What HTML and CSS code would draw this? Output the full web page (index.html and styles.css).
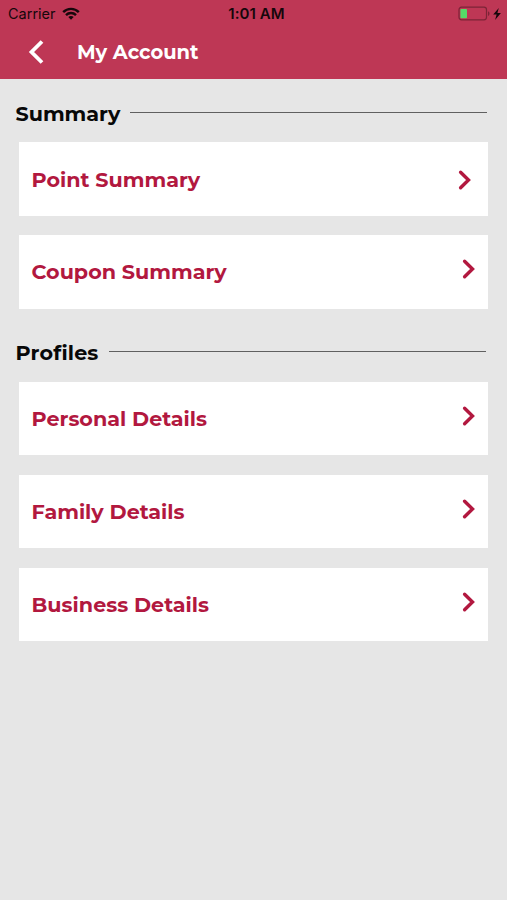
FILE: index.html
```html
<!DOCTYPE html>
<html lang="en">
<head>
<meta charset="utf-8">
<title>My Account</title>
<link rel="stylesheet" href="styles.css">
</head>
<body>
<header class="top">
  <div class="status">
    <div class="carrier"><span>Carrier</span>
      <svg class="wifi" width="18" height="14" viewBox="0 0 18 14" fill="none" stroke="#16070b" stroke-width="2.4"><path d="M1.200 5.200C5.600.8 12.400.8 16.800 5.200M4 8.100C6.800 5.300 11.200 5.300 14 8.100"/><path d="M9 12.800L6.300 10C7.800 8.600 10.200 8.600 11.700 10Z" fill="#16070b" stroke="none"/></svg>
    </div>
    <div class="time">1:01 AM</div>
    <div class="power">
      <svg width="44" height="16" viewBox="0 0 44 16"><rect x="1" y="1.200" width="27.500" height="12.600" rx="2.500" fill="none" stroke="#7c2437" stroke-width="1.200"/><rect x="2.400" y="3" width="6.600" height="9.200" rx=".8" fill="#55dc68"/><path d="M30 5.300c2 .8 2 3.800 0 4.600z" fill="#7c2437"/><path d="M40.800 2L35.200 8.400h3.400l-1.500 5.600 5.800-6.900h-3.500z" fill="#16070b"/></svg>
    </div>
  </div>
  <div class="nav">
    <svg class="back" width="18" height="26" viewBox="0 0 18 26" fill="none" stroke="#fff" stroke-width="3.800"><path d="M15 2.500L4.500 13l10.500 10.500"/></svg>
    <h1>My Account</h1>
  </div>
</header>
<main>
  <section>
    <h2>Summary</h2>
    <div class="cards">
      <a class="card first"><span>Point Summary</span><svg class="chev" viewBox="0 0 14 22"><path d="M2.600 3.200L10.500 11 2.600 18.800"/></svg></a>
      <a class="card"><span>Coupon Summary</span><svg class="chev" viewBox="0 0 14 22"><path d="M2.600 3.200L10.500 11 2.600 18.800"/></svg></a>
    </div>
  </section>
  <section class="second">
    <h2><span class="profiles">Profiles</span></h2>
    <div class="cards">
      <a class="card"><span>Personal Details</span><svg class="chev" viewBox="0 0 14 22"><path d="M2.600 3.200L10.500 11 2.600 18.800"/></svg></a>
      <a class="card"><span>Family Details</span><svg class="chev" viewBox="0 0 14 22"><path d="M2.600 3.200L10.500 11 2.600 18.800"/></svg></a>
      <a class="card"><span>Business Details</span><svg class="chev" viewBox="0 0 14 22"><path d="M2.600 3.200L10.500 11 2.600 18.800"/></svg></a>
    </div>
  </section>
</main>
</body>
</html>
```
FILE: styles.css
```css
* { box-sizing: border-box; }
body {
  margin: 0;
  min-height: 900px;
  background: #e6e6e6;
  font-family: Montserrat, Inter, sans-serif;
}
h1, h2 { margin: 0; }
.top { height: 79px; background: #be3755; }
.status {
  display: grid;
  grid-template-columns: 1fr auto 1fr;
  height: 27px;
  padding: 0 5px 0 8px;
  align-items: center;
  font: 14.500px/27px Inter, sans-serif;
  color: #16070b;
}
.carrier { display: flex; align-items: center; gap: 6px; }
.time { padding-left: 3px; font-weight: 600; font-size: 15px; letter-spacing: .1px; }
.power { display: flex; justify-content: flex-end; }
.nav { display: flex; align-items: center; height: 50px; padding-left: 27px; }
.back { flex: none; }
h1 { margin-left: 32px; color: #fff; font-size: 19.500px; line-height: 26px; font-weight: 700; }
h2 {
  display: flex;
  align-items: center;
  height: 63px;
  padding: 7px 20px 0 15.500px;
  gap: 10px;
  font-size: 20.700px;
  line-height: 28px;
  font-weight: 700;
  color: #080808;
}
h2::after { content: ""; flex: 1; height: 1px; margin-bottom: 3px; background: #606060; }
.second h2 { height: 73px; padding: 15px 21px 0 15.500px; }
.profiles { letter-spacing: .15px; }
.cards { display: grid; gap: 19.500px; padding: 0 19.500px 0 19px; }
.card {
  display: flex;
  align-items: center;
  justify-content: space-between;
  height: 73.500px;
  padding: 1px 12px 0 12.500px;
  background: #fff;
  color: #b2183f;
  font-size: 20.700px;
  line-height: 28px;
  font-weight: 700;
}
.chev { width: 14px; height: 22px; margin-bottom: 6px; fill: none; stroke: #b2183f; stroke-width: 3.400; stroke-linecap: round; }
.first { padding-top: 2px; }
.first .chev { margin: 0 3.500px 0 0; }
```
